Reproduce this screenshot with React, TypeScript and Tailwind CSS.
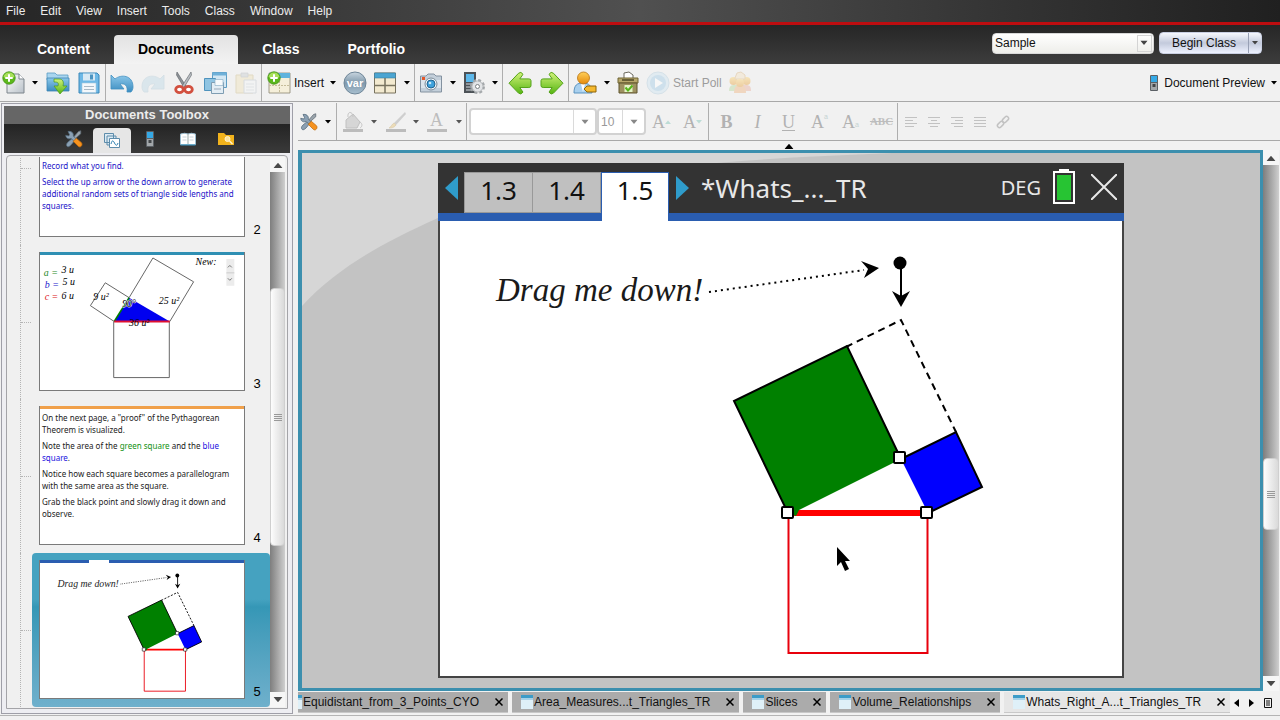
import type { ReactNode } from "react";
import clsx from "clsx";

const menus = ["File", "Edit", "View", "Insert", "Tools", "Class", "Window", "Help"];
const sections = ["Content", "Documents", "Class", "Portfolio"];

const openFiles = [
  { name: "Equidistant_from_3_Points_CYO", clipped: true },
  { name: "Area_Measures...t_Triangles_TR" },
  { name: "Slices" },
  { name: "Volume_Relationships" },
  { name: "Whats_Right_A...t_Triangles_TR", active: true },
];

/* ---------- shared gradients ---------- */

function Gradients() {
  return (
    <svg className="absolute size-0" aria-hidden="true">
      <defs>
        <linearGradient id="green" x1="0" y1="0" x2="0" y2="1">
          <stop offset="0" stopColor="#d2f27a" />
          <stop offset="1" stopColor="#55b512" />
        </linearGradient>
        <linearGradient id="blue" x1="0" y1="0" x2="0" y2="1">
          <stop offset="0" stopColor="#8cc8ea" />
          <stop offset="1" stopColor="#3b8cc0" />
        </linearGradient>
        <linearGradient id="paper" x1="0" y1="0" x2="1" y2="1">
          <stop offset="0" stopColor="#ffffff" />
          <stop offset="1" stopColor="#b9c1c9" />
        </linearGradient>
        <linearGradient id="orange" x1="0" y1="0" x2="0" y2="1">
          <stop offset="0" stopColor="#ffd05a" />
          <stop offset="1" stopColor="#e58a0c" />
        </linearGradient>
        <linearGradient id="steel" x1="0" y1="0" x2="0" y2="1">
          <stop offset="0" stopColor="#c9d6e0" />
          <stop offset="0.5" stopColor="#7f98ab" />
          <stop offset="1" stopColor="#a9c0d0" />
        </linearGradient>
      </defs>
    </svg>
  );
}

/* ---------- toolbar icons, all on a 24px grid ---------- */

function Icon({ children, className }: { children: ReactNode; className?: string }) {
  return (
    <svg viewBox="0 0 24 24" className={clsx("shrink-0", className ?? "size-6")} fill="none" aria-hidden="true">
      {children}
    </svg>
  );
}

function PlusBadge() {
  return (
    <g>
      <circle cx="7" cy="7" r="6.200" fill="#5cb81c" stroke="#3f8f12" strokeWidth="0.8" />
      <path d="M1.500 6a5.600 5.600 0 0 1 11 0q-5.500 3-11 0" fill="#a8e05a" />
      <path d="M7 3.300v7.400M3.300 7h7.400" stroke="#fff" strokeWidth="2" />
    </g>
  );
}

const NewIcon = () => (
  <Icon>
    <path d="M5 3h12l5 5v14H5z" fill="url(#paper)" stroke="#7d858c" />
    <path d="M17 3v5h5" fill="#fff" stroke="#7d858c" />
    <PlusBadge />
  </Icon>
);

const OpenIcon = () => (
  <Icon>
    <path d="M1 5V2h8l2 2h11v5H1z" fill="#a9d5ef" stroke="#5a9cc4" strokeWidth="0.8" />
    <path d="M1 7h22v13H1z" fill="url(#blue)" stroke="#3f86b4" strokeWidth="0.8" />
    <path d="M8 8h5c4 0 5 3 4 7h4l-7 8-6-8h4c1-3 0-4-4-4z" fill="url(#green)" stroke="#4b9a1a" strokeWidth="0.7" />
  </Icon>
);

const SaveIcon = () => (
  <Icon>
    <path d="M2 2h18l2 2v18H2z" fill="#6db8e6" stroke="#3b87b8" />
    <path d="M6 2.500h12v7H6z" fill="#d8e9f4" />
    <path d="M13 3.500h3v5h-3z" fill="#4b93c0" />
    <path d="M5 12h14v9.500H5z" fill="#f4f8fb" stroke="#a9c9dd" strokeWidth="0.6" />
    <path d="M7 15.500h10M7 18.500h10" stroke="#a9b9c5" />
  </Icon>
);

const UndoIcon = () => (
  <Icon>
    <path
      d="M1 4l4 4c6-5 18-4 18 8 0 2-1 4-2 5h-4c1-6-2-9-7-8l4 5H1z"
      fill="url(#blue)"
      stroke="#3f8fc2"
      strokeWidth="0.8"
    />
  </Icon>
);

const RedoIcon = () => (
  <Icon className="size-6 opacity-30">
    <path d="M23 4l-4 4C13 3 1 4 1 16c0 2 1 4 2 5h4c-1-6 2-9 7-8l-4 5h13z" fill="#a8cfe2" stroke="#8fb6ca" strokeWidth="0.8" />
  </Icon>
);

const CutIcon = () => (
  <Icon>
    <path d="M5 1l9 14-2 1.500L4.500 4z" fill="#8d9297" stroke="#5b6065" strokeWidth="0.6" />
    <path d="M19 1l-9 14 2 1.500L19.500 4z" fill="#b9bec3" stroke="#5b6065" strokeWidth="0.6" />
    <ellipse cx="7.500" cy="18.500" rx="3.800" ry="3.200" fill="#fff" stroke="#d2503f" strokeWidth="2.800" />
    <ellipse cx="16.500" cy="18.500" rx="3.800" ry="3.200" fill="#fff" stroke="#d2503f" strokeWidth="2.800" />
  </Icon>
);

const CopyIcon = () => (
  <Icon>
    <path d="M9.500 1.500h14v15h-14z" fill="#d3e7f3" stroke="#5c9cc3" />
    <path d="M9.500 1.500h14v3h-14z" fill="#6fb0d8" />
    <path d="M1.500 7.500h11v12h-11z" fill="#8fc4e2" stroke="#4f93bd" />
    <path d="M8.500 11.500h12v11h-12z" fill="#e3edf4" stroke="#7f9db2" />
    <path d="M12 8.500h8v6h-8z" fill="#f7fafc" stroke="#8fb2c8" strokeWidth="0.7" />
    <path d="M11 18h7" stroke="#9ab" />
  </Icon>
);

const PasteIcon = () => (
  <Icon className="size-6 opacity-40">
    <path d="M2 4h17v18H2z" fill="#efe0b4" stroke="#cbb982" />
    <path d="M7 2h7v4H7z" fill="#c6cacd" stroke="#a5aaad" strokeWidth="0.7" />
    <path d="M10 9h12v13H10z" fill="#f4f6f8" stroke="#b5bec5" />
    <path d="M12 13h8M12 16h8M12 19h8" stroke="#c9d0d5" />
  </Icon>
);

const InsertIcon = () => (
  <Icon>
    <path d="M2 2h21v20H2z" fill="#f5efda" stroke="#8a8672" strokeWidth="0.8" />
    <path d="M2 2h21v5H2z" fill="#5fb3dd" />
    <path d="M12.500 7v15M2 14.500h21" stroke="#c6bd9a" strokeDasharray="2 1" />
    <PlusBadge />
  </Icon>
);

const VarIcon = () => (
  <Icon>
    <circle cx="12" cy="12" r="11" fill="url(#steel)" stroke="#6f8698" />
    <text x="12" y="15.500" textAnchor="middle" fontSize="11" fontWeight="700" fill="#fff" fontFamily="Liberation Sans, sans-serif">
      var
    </text>
  </Icon>
);

const LayoutIcon = () => (
  <Icon>
    <path d="M1.500 2h21v20h-21z" fill="#f3ead0" stroke="#78735f" />
    <path d="M1.500 2h21v5h-21z" fill="#4ba5d2" stroke="#3b7fa3" strokeWidth="0.6" />
    <path d="M12 7v15M1.500 14.500h21" stroke="#78735f" strokeWidth="1.500" />
  </Icon>
);

const CameraIcon = () => (
  <Icon>
    <path d="M7 5l2-2h6l2 2h5.500v16h-21V5z" fill="#c3cfda" stroke="#8492a0" />
    <path d="M2 9h20v8H2z" fill="#dde5ec" />
    <rect x="3" y="6" width="3" height="3" fill="#e4572a" />
    <circle cx="12" cy="13" r="6" fill="#eef2f5" stroke="#7d8d9a" />
    <circle cx="12" cy="13" r="4" fill="#3ea2dc" stroke="#20638f" />
    <circle cx="11" cy="12" r="1.300" fill="#c6e8fa" />
  </Icon>
);

const DeviceGearIcon = () => (
  <Icon>
    <path d="M2 1h12v21H2z" fill="#4c5257" />
    <path d="M4 3h8v8H4z" fill="#5db8ea" />
    <path d="M4 13h8M4 16h6M4 19h6" stroke="#a7adb2" strokeWidth="1.500" />
    <circle cx="15.500" cy="15.500" r="6" fill="#dadddf" stroke="#a4a8ab" strokeWidth="3" strokeDasharray="2.700 2" />
    <circle cx="15.500" cy="15.500" r="5.500" fill="#e2e4e6" stroke="#9da1a4" strokeWidth="0.6" />
    <circle cx="15.500" cy="15.500" r="2" fill="#fff" stroke="#7c8184" />
  </Icon>
);

const ArrowIcon = ({ flip }: { flip?: boolean }) => (
  <Icon className={flip ? "size-6 -scale-x-100" : "size-6"}>
    <path
      d="M1 12.200L10.500 2.300q2.500-2.300 4.500 1l-3.200 4.600h9q2.200 0 2.200 1.800v5q0 1.800-2.200 1.800h-9l3.200 4.600q-2 3.300-4.500 1z"
      fill="url(#green)"
      stroke="#55a31a"
    />
  </Icon>
);

const UserIcon = () => (
  <Icon>
    <path d="M1 22c0-8 3-10 9-10s9 3 9 10z" fill="#a9d0ee" stroke="#5a93bf" />
    <path d="M8 13l2 8 2-8z" fill="#fff" />
    <circle cx="10.500" cy="7" r="6" fill="url(#orange)" stroke="#b87412" strokeWidth="0.8" />
    <path d="M11 18l3-3h9v6h-9z" fill="#f5b92e" stroke="#8f6508" />
  </Icon>
);

const BallotIcon = () => (
  <Icon>
    <path d="M8 8V2l5-1 4 3v4z" fill="#fff" stroke="#6c6a5e" />
    <path d="M2 7h20v5H2z" fill="#b7a76b" stroke="#6f6434" />
    <path d="M3 12h18v10H3z" fill="#9d9160" stroke="#5e552c" />
    <path d="M6 9h12" stroke="#4f4825" strokeWidth="1.500" />
    <path d="M8.500 14h8v7h-8z" fill="#e4f3c6" />
    <path d="M9.500 16.500l2.500 3 4.500-5" stroke="#57b51a" strokeWidth="2" />
  </Icon>
);

const PlayIcon = () => (
  <Icon className="size-6 opacity-45">
    <circle cx="12" cy="12" r="11" fill="#cfe5f2" stroke="#b5cfde" />
    <circle cx="12" cy="12" r="8" fill="#a4cde6" />
    <path d="M9 7l8 5-8 5z" fill="#fff" />
  </Icon>
);

const GroupIcon = () => (
  <Icon className="size-6 opacity-35">
    <circle cx="5.500" cy="10" r="4" fill="url(#orange)" />
    <circle cx="18.500" cy="10" r="4" fill="url(#orange)" />
    <path d="M1 20c0-5 2-6 6-6h3v6z" fill="#a8d48c" />
    <path d="M14 14h4c4 0 5 2 5 6h-9z" fill="#e6a08a" />
    <path d="M7 7l2-5 4-1 4 3v4H7z" fill="#f6dfb8" stroke="#d7a867" />
    <path d="M6 22c0-6 2-8 6-8s6 2 6 8z" fill="#efa765" />
    <circle cx="12" cy="12" r="4" fill="url(#orange)" />
  </Icon>
);

const HandheldIcon = () => (
  <svg viewBox="0 0 8 16" className="h-4 w-2 shrink-0" aria-hidden="true">
    <rect width="8" height="16" rx="1" fill="#5b6065" />
    <path d="M1 1h6v6H1z" fill="#35a9e6" />
    <path d="M1 8h6v7H1z" fill="#a3a7aa" />
    <path d="M2.500 9h3v3h-3z" fill="#43474a" />
  </svg>
);

const ToolsIcon = () => (
  <Icon className="size-[18px]">
    <path d="M21 1l-3 1-7 8 2 2 8-7z" fill="#9aa4ac" stroke="#5f6a73" />
    <path d="M3 22c-2-2-1-4 1-6l6-5 3 3-5 6c-2 2-4 3-5 2z" fill="#8ba0b3" stroke="#52687a" />
    <path d="M4 2l2 4-1 2-4-1c0 4 4 6 7 4l4 4 3-3-4-4c1-4-3-7-7-6z" fill="#8ba0b3" stroke="#52687a" />
    <path d="M15 11l7 6c2 3-1 7-4 5l-7-7z" fill="#f6921e" stroke="#c06a0a" />
  </Icon>
);

/* ---------- small controls ---------- */

function Caret({ className }: { className?: string }) {
  return (
    <svg viewBox="0 0 6 4" className={clsx("h-1 w-1.5 shrink-0", className ?? "text-black")} aria-hidden="true">
      <path d="M0 0h6L3 3.500z" fill="currentColor" />
    </svg>
  );
}

function MoreButton({ label, className, caret }: { label: string; className?: string; caret?: string }) {
  return (
    <button type="button" aria-label={label} className={clsx("flex h-full items-center justify-center", className ?? "w-[14px]")}>
      <Caret className={caret} />
    </button>
  );
}

function ToolButton({ label, children, className }: { label: string; children: ReactNode; className?: string }) {
  return (
    <button
      type="button"
      aria-label={label}
      className={clsx("flex h-full shrink-0 items-center justify-center", className ?? "w-[31px]")}
    >
      {children}
    </button>
  );
}

const Divider = () => <span className="h-full w-px shrink-0 bg-[#aeaeae]" />;

interface ScrollbarProps {
  before: number;
  thumb: number;
  after: number;
  className?: string;
}

function Scrollbar({ before, thumb, after, className }: ScrollbarProps) {
  return (
    <div
      className={clsx(
        "flex shrink-0 flex-col items-stretch bg-gradient-to-r from-[#7e7e7e] via-[#a6a6a6] to-[#cfcfcf]",
        className,
      )}
    >
      <button type="button" aria-label="Scroll up" className="flex h-[15px] items-center justify-center bg-[#f6f6f6]">
        <Caret className="rotate-180 scale-150 text-[#4a4a4a]" />
      </button>
      <div className="basis-0" style={{ flexGrow: before }} />
      <div
        style={{ flexGrow: thumb }}
        className="flex basis-0 flex-col items-center justify-center gap-px rounded-sm border border-[#cfcfcf] bg-gradient-to-r from-[#fdfdfd] to-[#dadada]"
      >
        <span className="h-px w-2 bg-[#999]" />
        <span className="h-px w-2 bg-[#999]" />
        <span className="h-px w-2 bg-[#999]" />
        <span className="h-px w-2 bg-[#999]" />
      </div>
      <div className="basis-0" style={{ flexGrow: after }} />
      <button type="button" aria-label="Scroll down" className="flex h-[15px] items-center justify-center bg-[#f6f6f6]">
        <Caret className="scale-150 text-[#4a4a4a]" />
      </button>
    </div>
  );
}

/* ---------- geometry page, used on the canvas and in its thumbnail ---------- */

function ProofDrawing({ line = 2, children }: { line?: number; children?: ReactNode }) {
  return (
    <svg viewBox="440 221 682 455" className="block w-full bg-white" role="img" aria-label="Proof of the Pythagorean Theorem">
      <text x="496" y="301" fontSize="33" fontStyle="italic" fontFamily="Liberation Serif, serif" fill="#1a1a1a">
        Drag me down!
      </text>
      <path d="M709 292L864 270" stroke="#000" strokeWidth={line} strokeDasharray="2 4" />
      <path d="M861 261l18 7-15 10 4-9z" />
      <circle cx="900" cy="263" r="6.500" />
      <path d="M901 263v34" stroke="#000" strokeWidth={line} />
      <path d="M892 291l9 16 9-16-9 5z" />

      <path d="M846 347L901 320L956 432" fill="none" stroke="#000" strokeWidth={line} strokeDasharray="7 5" />
      <path d="M788 513H928" stroke="#f00" strokeWidth="6" />
      <path d="M788 513L734 401L847 346L901 459L799 510L796 516z" fill="#008000" />
      <path d="M788 513L734 401L847 346L901 459" fill="none" stroke="#000" strokeWidth={line} />
      <path d="M901 459L956 432L982 487L928 513z" fill="#0000ff" />
      <path d="M901 459L956 432L982 487L928 513" fill="none" stroke="#000" strokeWidth={line} />
      <path d="M788.500 513V653H927.500V513" fill="none" stroke="#e8000c" strokeWidth={line} />

      <g fill="#fff" stroke="#000" strokeWidth="2">
        <rect x="782" y="507" width="11" height="11" rx="1" />
        <rect x="894" y="452" width="11" height="11" rx="1" />
        <rect x="921" y="507" width="11" height="11" rx="1" />
      </g>
      {children}
    </svg>
  );
}

function TriangleDrawing() {
  return (
    <svg
      viewBox="40 255 204 136"
      className="block w-full"
      fontFamily="Liberation Serif, serif"
      fontSize="10"
      fontStyle="italic"
      role="img"
      aria-label="Triangle with squares on its sides"
    >
      <path d="M114 322L129 298L170 322z" fill="#0000f0" />
      <g fill="none" stroke="#666" strokeWidth="1">
        <path d="M113.500 322V378.500H169.500V322" />
        <path d="M114 322L90 306L105 283L129 298" />
        <path d="M129 298L153 258L194 282L170 322" />
      </g>
      <path d="M114 322L129 298" stroke="#008000" strokeWidth="1.500" />
      <path d="M114 322H170" stroke="#e01030" strokeWidth="2" />
      <text x="43" y="276" fill="#2a8a2a">a =</text>
      <text x="61" y="273">3 u</text>
      <text x="44" y="288" fill="#22c">b =</text>
      <text x="62" y="285">5 u</text>
      <text x="44" y="300" fill="#d12">c =</text>
      <text x="61" y="299">6 u</text>
      <text x="93" y="300">9 u²</text>
      <text x="122" y="307" stroke="#fff" strokeWidth="1" paintOrder="stroke">90°</text>
      <text x="159" y="304">25 u²</text>
      <text x="129" y="327">36 u²</text>
      <text x="196" y="265">New:</text>
      <g fill="none" stroke="#777">
        <path d="M227 259h8v27h-8z" fill="#ececec" stroke="none" />
        <path d="M228.500 267.500l2-2 2 2M228.500 278.500l2 2 2-2" />
        <path d="M227 273h8" stroke="#ccc" />
      </g>
    </svg>
  );
}

/* ---------- page sorter ---------- */

interface PageItemProps {
  number: number;
  bar?: string;
  selected?: boolean;
  children: ReactNode;
}

function PageItem({ number, bar, selected, children }: PageItemProps) {
  return (
    <li className="flex h-[154px] shrink-0">
      <div className="flex w-[25px] shrink-0 items-center pl-[13px]">
        <span className="h-full border-l border-dotted border-[#b4b4b4]" />
        <span className="w-[10px] border-t border-dotted border-[#b4b4b4]" />
      </div>
      <button
        type="button"
        aria-label={`Page ${number}`}
        className={clsx(
          "flex flex-1 items-start rounded-sm pt-[7px] pl-[7px] text-left",
          selected && "bg-gradient-to-b from-[#45a2c0] from-30% via-[#3597b6] via-35% to-[#6fb0cc]",
        )}
      >
        <div className="flex h-[139px] w-[206px] shrink-0 flex-col overflow-hidden border border-t-0 border-[#7a7a7a] bg-white">
          <span className={clsx("h-[3px] shrink-0", bar)} />
          {children}
        </div>
        <span className="w-6 self-end pb-[7px] text-center text-[13px] leading-4 text-black">{number}</span>
      </button>
    </li>
  );
}

function PageSorter() {
  return (
    <div className="mx-[2px] mt-[2px] mb-[2px] flex min-h-0 flex-1 rounded-t-sm border border-[#a4a4a8] bg-[#f0f0f0] py-px pr-[2px]">
      <ul className="flex min-h-0 flex-1 flex-col justify-end overflow-hidden">
        <PageItem number={2} bar="bg-[#2f8fb3]">
          <div className="flex flex-1 flex-col justify-end gap-1 pr-2 pb-6 pl-[2px] font-['Noto_Sans'] text-[8px] leading-3 text-[#1a12c8]">
            <p>Record what you find.</p>
            <p>Select the up arrow or the down arrow to generate additional random sets of triangle side lengths and squares.</p>
          </div>
        </PageItem>
        <PageItem number={3} bar="bg-[#2f8fb3]">
          <TriangleDrawing />
        </PageItem>
        <PageItem number={4} bar="bg-[#f0a04a]">
          <div className="flex flex-col gap-1 pt-[3px] pr-2 pl-[2px] font-['Noto_Sans'] text-[8px] leading-3 text-[#222]">
            <p>On the next page, a "proof" of the Pythagorean Theorem is visualized.</p>
            <p>
              Note the area of the <span className="text-[#129112]">green square</span> and the{" "}
              <span className="text-[#1a12e0]">blue</span> <span className="text-[#1a12e0]">square</span>.
            </p>
            <p>Notice how each square becomes a parallelogram with the same area as the square.</p>
            <p>Grab the black point and slowly drag it down and observe.</p>
          </div>
        </PageItem>
        <PageItem number={5} bar="bg-[linear-gradient(90deg,#2a5db0_24%,#fff_24%_34%,#2a5db0_34%)]" selected>
          <ProofDrawing line={3} />
        </PageItem>
      </ul>
      <Scrollbar before={116} thumb={257} after={146} className="w-[15px]" />
    </div>
  );
}

function Toolbox() {
  return (
    <aside className="mt-px mb-px ml-px flex w-[292px] shrink-0 flex-col border border-[#9f9fa8] bg-[#eeeef2] p-[2px]">
      <h2 className="h-[18px] bg-[#666] text-center text-[13px] leading-[18px] font-bold text-[#ececec]">Documents Toolbox</h2>
      <div className="flex h-[29px] items-end bg-gradient-to-b from-[#242424] to-[#3a3a3a] pl-[51px]">
        <ToolButton label="Document Tools" className="w-[38px]">
          <ToolsIcon />
        </ToolButton>
        <button
          type="button"
          aria-label="Page Sorter"
          className="flex h-[25px] w-[38px] items-center justify-center rounded-t-sm bg-[#e6e6e6]"
        >
          <svg viewBox="0 0 16 15" className="h-[15px] w-4" fill="#dbe9f2" stroke="#5d8cab" aria-hidden="true">
            <path d="M.5.5h9v9h-9zM3 3h9v9H3z" />
            <path d="M5.500 5.500h10v9h-10z" fill="#fff" />
            <path d="M7 11c1-4 2-4 3.500-1s2.500 3 3.500 0" fill="none" stroke="#2c7fb0" />
          </svg>
        </button>
        <ToolButton label="TI-SmartView" className="w-[38px]">
          <HandheldIcon />
        </ToolButton>
        <ToolButton label="Utilities" className="w-[38px]">
          <svg viewBox="0 0 16 14" className="h-[14px] w-4" aria-hidden="true">
            <path d="M.5 2Q5 .5 8 2q3-1.500 7.500 0v10.500H.5z" fill="#fff" stroke="#9bbdd0" />
            <path d="M8 2v10" stroke="#9aa" />
            <path d="M2.500 5h4M2.500 8h4M9.500 5h4M9.500 8h4" stroke="#c8d4da" />
            <path d="M.5 13h15" stroke="#3b98c4" />
          </svg>
        </ToolButton>
        <ToolButton label="Content Explorer" className="w-[38px]">
          <svg viewBox="0 0 16 14" className="h-[14px] w-4" aria-hidden="true">
            <path d="M0 1h6l2 2h8v10H0z" fill="#f2b31c" />
            <circle cx="9.500" cy="7" r="2.500" fill="#fbe3a0" stroke="#fff3cf" />
            <path d="M11.500 9l3 3" stroke="#fff3cf" strokeWidth="1.500" />
          </svg>
        </ToolButton>
      </div>
      <PageSorter />
    </aside>
  );
}

/* ---------- toolbars ---------- */

function MainToolbar() {
  return (
    <div className="flex h-[38px] shrink-0 items-center border-b border-[#a8a8a8] bg-[#f1f1f1] text-[12px]">
      <ToolButton label="New" className="w-[28px]"><NewIcon /></ToolButton>
      <MoreButton label="New options" />
      <ToolButton label="Open"><OpenIcon /></ToolButton>
      <ToolButton label="Save" className="w-[32px]"><SaveIcon /></ToolButton>
      <Divider />
      <ToolButton label="Undo"><UndoIcon /></ToolButton>
      <ToolButton label="Redo"><RedoIcon /></ToolButton>
      <ToolButton label="Cut"><CutIcon /></ToolButton>
      <ToolButton label="Copy"><CopyIcon /></ToolButton>
      <ToolButton label="Paste"><PasteIcon /></ToolButton>
      <Divider />
      <button type="button" className="flex h-full items-center gap-[3px] pr-[2px] pl-[5px]">
        <InsertIcon />
        Insert
      </button>
      <MoreButton label="Insert options" />
      <ToolButton label="Variables" className="w-[30px]"><VarIcon /></ToolButton>
      <ToolButton label="Page Layout" className="w-[30px]"><LayoutIcon /></ToolButton>
      <MoreButton label="Layout options" />
      <Divider />
      <ToolButton label="Take Screen"><CameraIcon /></ToolButton>
      <MoreButton label="Capture options" />
      <ToolButton label="Handheld setup" className="w-[28px]"><DeviceGearIcon /></ToolButton>
      <MoreButton label="Setup options" />
      <Divider />
      <ToolButton label="Previous page" className="w-[33px]"><ArrowIcon /></ToolButton>
      <ToolButton label="Next page" className="w-[32px]"><ArrowIcon flip /></ToolButton>
      <Divider />
      <ToolButton label="Student"><UserIcon /></ToolButton>
      <MoreButton label="Student options" />
      <ToolButton label="Collect responses" className="w-[28px]"><BallotIcon /></ToolButton>
      <button type="button" className="flex h-full items-center gap-[3px] pl-1 text-[#9c9c9c]">
        <PlayIcon />
        Start Poll
      </button>
      <ToolButton label="Show responses" className="w-[36px]"><GroupIcon /></ToolButton>
      <button type="button" className="ml-auto flex h-full items-center gap-[6px] pr-[3px] pl-2 whitespace-nowrap">
        <HandheldIcon />
        Document Preview
        <Caret />
      </button>
    </div>
  );
}

function FormatIcon({ children }: { children: ReactNode }) {
  return (
    <svg viewBox="0 0 20 22" className="h-[22px] w-5" fill="none" aria-hidden="true">
      {children}
      <path d="M0 18h20v3H0z" fill="#bcbcbc" />
    </svg>
  );
}

function AlignIcon({ lines }: { lines: [number, number][] }) {
  return (
    <svg viewBox="0 0 12 12" className="size-3" stroke="#c2c2c2" aria-hidden="true">
      {lines.map(([x1, x2], i) => (
        <path key={i} d={`M${x1} ${i * 3 + 1.5}H${x2}`} />
      ))}
    </svg>
  );
}

function FormatToolbar() {
  const serif = "font-['Liberation_Serif'] text-[18px] leading-[22px] text-[#b2b2b2]";
  return (
    <div className="flex h-[39px] shrink-0 items-center border-b border-[#a8a8a8] pt-px">
      <ToolButton label="Document Tools" className="w-[22px]"><ToolsIcon /></ToolButton>
      <MoreButton label="Tool options" className="w-[16px]" />
      <Divider />
      <ToolButton label="Fill Color">
        <FormatIcon>
          <path d="M3 9l7-6 7 8-3 6H3z" fill="#d6d6d6" stroke="#c0c0c0" />
          <path d="M5 6c-1-6 5-6 5 0M17 11c3 2 2 5 0 6" stroke="#c6c6c6" />
        </FormatIcon>
      </ToolButton>
      <MoreButton label="Fill options" className="w-[12px]" caret="text-[#555]" />
      <ToolButton label="Line Color">
        <FormatIcon>
          <path d="M19 1L8 12l2 2L20 3z" fill="#cfcfcf" />
          <path d="M8 12l2 2c-2 3-5 3-7 3 2-1 3-4 5-5z" fill="#ecdcb8" stroke="#d6c8a8" strokeWidth="0.6" />
        </FormatIcon>
      </ToolButton>
      <MoreButton label="Line options" className="w-[10px]" caret="text-[#555]" />
      <ToolButton label="Text Color">
        <span className="flex w-5 flex-col items-center border-b-[3px] border-[#bcbcbc] font-['Liberation_Serif'] text-[18px] leading-[18px] text-[#bdbdbd]">
          A
        </span>
      </ToolButton>
      <MoreButton label="Text color options" className="w-[14px]" caret="text-[#555]" />
      <Divider />
      <div className="relative ml-[2px] h-[27px] w-[128px] shrink-0 rounded-sm border-2 border-[#d2d2d2] bg-white">
        <select aria-label="Font" className="h-full w-full appearance-none bg-transparent px-1 outline-none" />
        <span className="pointer-events-none absolute inset-y-0 right-0 flex w-[22px] items-center justify-center border-l border-[#dadada]">
          <Caret className="scale-125 text-[#888]" />
        </span>
      </div>
      <div className="relative h-[27px] w-[49px] shrink-0 rounded-sm border-2 border-[#d2d2d2] bg-white text-[12px] text-[#999]">
        <select aria-label="Font size" className="h-full w-full appearance-none bg-transparent pl-[2px] outline-none">
          <option>10</option>
        </select>
        <span className="pointer-events-none absolute inset-y-0 right-0 flex w-[22px] items-center justify-center border-l border-[#dadada]">
          <Caret className="scale-125 text-[#888]" />
        </span>
      </div>
      <ToolButton label="Increase font size">
        <span className={serif}>A</span>
        <Caret className="rotate-180 text-[#bcdcd6]" />
      </ToolButton>
      <ToolButton label="Decrease font size">
        <span className={serif}>A</span>
        <Caret className="text-[#bcdcd6]" />
      </ToolButton>
      <Divider />
      <div className="flex h-full pl-[2px]">
        <ToolButton label="Bold"><b className={serif}>B</b></ToolButton>
        <ToolButton label="Italic"><i className={serif}>I</i></ToolButton>
        <ToolButton label="Underline"><u className={clsx(serif, "underline-offset-2")}>U</u></ToolButton>
        <ToolButton label="Superscript">
          <span className={serif}>A</span>
          <span className="self-center pb-2 text-[7px] text-[#c5d3d3]">a</span>
        </ToolButton>
        <ToolButton label="Subscript">
          <span className={serif}>A</span>
          <span className="self-center pt-2 text-[7px] text-[#c5d3d3]">a</span>
        </ToolButton>
        <ToolButton label="Strikethrough">
          <s className="font-['Liberation_Serif'] text-[11px] font-bold text-[#bdbdbd]">ABC</s>
        </ToolButton>
      </div>
      <Divider />
      <div className="flex h-full pl-px">
        <ToolButton label="Align left" className="w-[23px]"><AlignIcon lines={[[0, 12], [0, 8], [0, 12], [0, 9]]} /></ToolButton>
        <ToolButton label="Align center" className="w-[23px]"><AlignIcon lines={[[0, 12], [3, 9], [0, 12], [2, 10]]} /></ToolButton>
        <ToolButton label="Align right" className="w-[23px]"><AlignIcon lines={[[0, 12], [4, 12], [0, 12], [3, 12]]} /></ToolButton>
        <ToolButton label="Justify" className="w-[23px]"><AlignIcon lines={[[0, 12], [0, 12], [0, 12], [0, 12]]} /></ToolButton>
        <ToolButton label="Insert link" className="w-[23px]">
          <svg viewBox="0 0 14 14" className="size-[14px]" fill="none" stroke="#c2c2c2" strokeWidth="1.500" aria-hidden="true">
            <rect x="-3.500" y="-2" width="7" height="4" rx="2" transform="translate(9.500 4.500) rotate(-45)" />
            <rect x="-3.500" y="-2" width="7" height="4" rx="2" transform="translate(4.500 9.500) rotate(-45)" />
          </svg>
        </ToolButton>
      </div>
    </div>
  );
}

/* ---------- document ---------- */

function DocumentPage() {
  return (
    <article className="w-full max-w-[686px] bg-[#333] font-['Noto_Sans']">
      <header className="flex h-[50px] items-start text-[26px] text-[#e8e8e8]">
        <button type="button" aria-label="Previous pages" className="flex h-full w-[26px] items-center justify-center">
          <svg viewBox="0 0 13 24" className="h-6 w-[13px]" aria-hidden="true"><path d="M13 0v24L0 12z" fill="#2f9ccb" /></svg>
        </button>
        <button type="button" className="mt-[9px] h-[41px] w-[69px] border border-[#999] bg-[#c0c0c0] pb-1 text-center leading-[35px] text-[#111]">1.3</button>
        <button type="button" className="mt-[9px] h-[41px] w-[68px] border border-l-0 border-[#999] bg-[#c0c0c0] pb-1 text-center leading-[35px] text-[#111]">1.4</button>
        <button type="button" className="z-10 mt-[9px] h-[49px] w-[68px] border border-b-0 border-[#2a5db0] bg-white pb-[13px] text-center leading-[35px] text-[#111]">1.5</button>
        <button type="button" aria-label="Next pages" className="flex h-full w-[26px] items-center justify-center">
          <svg viewBox="0 0 13 24" className="h-6 w-[13px]" aria-hidden="true"><path d="M0 0v24l13-12z" fill="#2f9ccb" /></svg>
        </button>
        <h1 className="pl-1.5 leading-[50px]">*Whats_..._TR</h1>
        <span className="ml-auto text-[20px] leading-[50px]">DEG</span>
        <svg viewBox="0 0 22 36" className="mt-[6px] ml-[12px] h-9 w-[22px]" aria-label="Battery">
          <path d="M6 0h10v3H6z" fill="#fff" />
          <path d="M1 3h20v31H1z" fill="#333" stroke="#fff" strokeWidth="2" />
          <path d="M4 6h14v25H4z" fill="#27c433" />
        </svg>
        <button type="button" aria-label="Close" className="flex h-[48px] w-[49px] items-center justify-center pl-[9px]">
          <svg viewBox="0 0 26 26" className="size-[26px]" stroke="#e8e8e8" strokeWidth="2" aria-hidden="true">
            <path d="M0 0l26 26M26 0L0 26" />
          </svg>
        </button>
      </header>
      <div className="h-2 bg-[#2a5db0]" />
      <div className="border-x-2 border-b-2 border-[#444]">
        <ProofDrawing>
          <path d="M837 547v19l4-4 4 9 4-2-4-8h5z" />
        </ProofDrawing>
      </div>
    </article>
  );
}

function Workspace() {
  return (
    <div className="mr-px flex min-h-0 flex-1">
      <div className="relative flex min-w-0 flex-1 justify-center overflow-hidden border-3 border-l-4 border-[#3c8fae] bg-[#c3c3c3] pt-[10px]">
        <svg viewBox="0 0 958 535" className="absolute top-0 left-0 w-full" aria-hidden="true">
          <path d="M0 0H590C380 8 230 23 136 65C80 90 35 115 0 153z" fill="#d6d6d6" />
        </svg>
        <div className="relative flex w-full items-start justify-center">
          <DocumentPage />
        </div>
      </div>
      <Scrollbar before={293} thumb={70} after={146} className="w-4" />
    </div>
  );
}

function FileTabs() {
  return (
    <nav className="flex h-[24px] shrink-0 items-start gap-1 overflow-hidden pt-px text-[12px]" aria-label="Open documents">
      {openFiles.map((file) => (
        <div
          key={file.name}
          className={clsx(
            "flex h-[21px] shrink-0 items-center border-b border-[#c8c8c8] pr-[4px]",
            file.active ? "bg-[#e6e6e6]" : "bg-[#ababab]",
            file.clipped ? "pl-0" : "pl-[9px]",
          )}
        >
          <button type="button" className="flex items-center gap-px">
            <svg
              viewBox="0 0 12 14"
              preserveAspectRatio="xMaxYMid slice"
              className={clsx("h-[14px]", file.clipped ? "w-1" : "w-3")}
              aria-hidden="true"
            >
              <path d="M0 0h12v14H0z" fill="#dff0f8" />
              <path d="M0 0h12v3H0z" fill="#3c9cc8" />
              <path d="M0 3h12v2H0z" fill="#a5d2e8" />
            </svg>
            {file.name}
          </button>
          <button type="button" aria-label={`Close ${file.name}`} className="ml-[15px] flex size-[10px] items-center justify-center">
            <svg viewBox="0 0 8 8" className="size-2" stroke="#000" strokeWidth="1.500" aria-hidden="true">
              <path d="M.5.5l7 7M7.500.5l-7 7" />
            </svg>
          </button>
        </div>
      ))}
      <div className="ml-auto flex h-[21px] shrink-0 items-center gap-[10px] pr-2">
        <button type="button" aria-label="Previous tab">
          <svg viewBox="0 0 5 8" className="h-2 w-[5px]" aria-hidden="true"><path d="M5 0v8L0 4z" /></svg>
        </button>
        <button type="button" aria-label="Next tab">
          <svg viewBox="0 0 5 8" className="h-2 w-[5px]" aria-hidden="true"><path d="M0 0v8l5-4z" /></svg>
        </button>
        <button type="button" aria-label="List documents">
          <svg viewBox="0 0 8 10" className="h-[10px] w-2" fill="none" stroke="#111" aria-hidden="true">
            <path d="M.5.5h7v9h-7zM2 3h4M2 5h4M2 7h4" />
          </svg>
        </button>
      </div>
    </nav>
  );
}

export default function App() {
  return (
    <div className="flex h-screen flex-col overflow-hidden bg-[#f1f1f1] font-['Liberation_Sans',sans-serif] text-[#111]">
      <Gradients />
      <nav
        aria-label="Menu"
        className="flex h-[22px] shrink-0 items-center gap-[15px] bg-gradient-to-r from-[#262626] via-[#505050] to-[#202020] pl-1.5 text-[12px] text-[#ececec]"
      >
        {menus.map((menu) => (
          <button key={menu} type="button">{menu}</button>
        ))}
      </nav>
      <div className="h-[3px] shrink-0 bg-[#bd0d10]" />

      <div className="flex h-[39px] shrink-0 items-end bg-gradient-to-b from-[#262626] to-[#3d3d3d]">
        <nav aria-label="Workspace" className="flex pl-[13px] text-[14px] font-bold">
          {sections.map((section) => (
            <button
              key={section}
              type="button"
              className={clsx(
                "h-[29px] rounded-t-sm px-6",
                section === "Documents" ? "bg-gradient-to-b from-[#e2e2e2] to-[#f3f3f3] text-black" : "text-white",
              )}
            >
              {section}
            </button>
          ))}
        </nav>
        <div className="ml-auto flex items-center gap-[5px] self-start pt-[7px] pr-[18px] text-[12px]">
          <div className="relative h-[21px] w-[162px] rounded-sm border border-[#d8d8d8] bg-gradient-to-b from-white to-[#eeeeea]">
            <select aria-label="Class" className="h-full w-full appearance-none bg-transparent pl-[2px] outline-none">
              <option>Sample</option>
            </select>
            <span className="pointer-events-none absolute inset-y-px right-px flex w-[15px] items-center justify-center border border-[#d4d4d4]">
              <Caret className="scale-125 text-[#444]" />
            </span>
          </div>
          <div className="flex h-[22px] rounded-sm border border-[#c9cfe2] bg-gradient-to-b from-[#f6f8fd] via-[#c3cadc] to-[#eef2ff]">
            <button type="button" className="px-3">Begin Class</button>
            <MoreButton label="Class options" className="w-[13px] border-l border-[#98a0b5]" caret="text-[#444]" />
          </div>
        </div>
      </div>

      <MainToolbar />

      <main className="flex min-h-0 flex-1">
        <Toolbox />
        <div className="ml-[5px] flex min-w-0 flex-1 flex-col">
          <FormatToolbar />
          <button type="button" aria-label="Collapse toolbar" className="flex h-[9px] shrink-0 items-center justify-center">
            <Caret className="rotate-180 scale-150 text-black" />
          </button>
          <Workspace />
          <FileTabs />
        </div>
      </main>
      <footer className="h-[5px] shrink-0 border-t border-[#b4b4b4]" />
    </div>
  );
}
